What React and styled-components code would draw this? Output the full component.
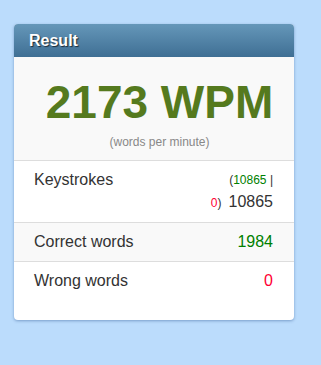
import styled, { createGlobalStyle } from "styled-components"

const Global = createGlobalStyle`
    body {
        margin: 0;
        background: #bbdcfc;
        font-family: "Liberation Sans", Arial, sans-serif;
        color: #333;
    }
`

const Page = styled.div`
    padding: 24px 0 0 14px;
    min-height: 365px;
    box-sizing: border-box;
`

const Card = styled.section`
    width: 280px;
    background: #fff;
    border-radius: 4px;
    box-shadow: 0 1px 3px rgba(40, 80, 140, 0.45);
    overflow: hidden;
    padding-bottom: 20px;
`

const Header = styled.header`
    height: 33px;
    display: flex;
    align-items: center;
    padding-left: 15px;
    background: linear-gradient(to bottom, #6597b9, #3f6f94);
    color: #fff;
    font-weight: bold;
    font-size: 16px;
    text-shadow: 1px 1px 1px #1b2a36;
`

const Speed = styled.div`
    background: #f9f9f9;
    padding: 20px 0 9px 11px;
    text-align: center;
`

const Wpm = styled.div`
    font-size: 46px;
    line-height: 50px;
    font-weight: bold;
    color: #557a1e;
`

const Unit = styled.div`
    margin-top: 7px;
    font-size: 12px;
    line-height: 17px;
    color: #888;
`

const Row = styled.div`
    display: flex;
    justify-content: space-between;
    align-items: flex-start;
    padding: 8px 21px 8px 20px;
    border-top: 1px solid #ddd;
    font-size: 16px;
    line-height: 22px;
    background: ${(p) => (p.$shaded ? "#f9f9f9" : "#fff")};
`

const Value = styled.div`
    display: flex;
    flex-direction: column;
    align-items: flex-end;
    color: ${(p) => p.$color || "#333"};
`

const Small = styled.small`
    font-size: 12px;
    color: #333;
    margin-right: ${(p) => (p.$gap ? "7px" : "0")};
`

const Good = styled.span`
    color: #008000;
`

const Bad = styled.span`
    color: #ff0033;
`

function App() {
    return (
        <Page>
            <Global />
            <Card>
                <Header>Result</Header>
                <Speed>
                    <Wpm>2173 WPM</Wpm>
                    <Unit>(words per minute)</Unit>
                </Speed>
                <Row>
                    <span>Keystrokes</span>
                    <Value>
                        <Small>
                            (<Good>10865</Good> |
                        </Small>
                        <span>
                            <Small $gap>
                                <Bad>0</Bad>)
                            </Small>
                            10865
                        </span>
                    </Value>
                </Row>
                <Row $shaded>
                    <span>Correct words</span>
                    <Value $color="#008000">1984</Value>
                </Row>
                <Row>
                    <span>Wrong words</span>
                    <Value $color="#ff0033">0</Value>
                </Row>
            </Card>
        </Page>
    )
}

export default App
